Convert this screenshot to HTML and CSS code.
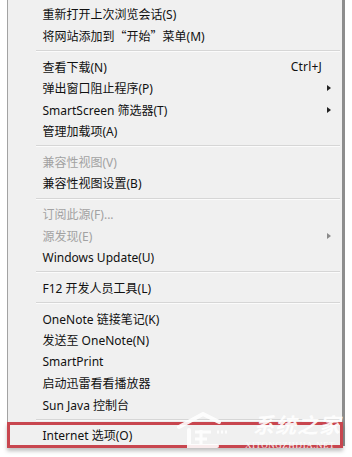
FILE: index.html
```html
<!DOCTYPE html>
<html>
<head>
<meta charset="utf-8">
<link rel="stylesheet" href="styles.css">
</head>
<body>
<div class="page">
  <div class="menu">
    <div class="item"><span class="label">重新打开上次浏览会话(S)</span></div>
    <div class="item"><span class="label">将网站添加到<span class="cjk">“开始”</span>菜单(M)</span></div>
    <div class="sep"></div>
    <div class="item"><span class="label">查看下载(N)</span><span class="key">Ctrl+J</span></div>
    <div class="item"><span class="label">弹出窗口阻止程序(P)</span><span class="arrow"></span></div>
    <div class="item"><span class="label">SmartScreen 筛选器(T)</span><span class="arrow"></span></div>
    <div class="item"><span class="label">管理加载项(A)</span></div>
    <div class="sep"></div>
    <div class="item disabled"><span class="label">兼容性视图(V)</span></div>
    <div class="item"><span class="label">兼容性视图设置(B)</span></div>
    <div class="sep"></div>
    <div class="item disabled"><span class="label">订阅此源(F)...</span></div>
    <div class="item disabled"><span class="label">源发现(E)</span><span class="arrow"></span></div>
    <div class="item"><span class="label">Windows Update(U)</span></div>
    <div class="sep"></div>
    <div class="item"><span class="label">F12 开发人员工具(L)</span></div>
    <div class="sep"></div>
    <div class="item"><span class="label">OneNote 链接笔记(K)</span></div>
    <div class="item"><span class="label">发送至 OneNote(N)</span></div>
    <div class="item"><span class="label">SmartPrint</span></div>
    <div class="item"><span class="label">启动迅雷看看播放器</span></div>
    <div class="item"><span class="label">Sun Java 控制台</span></div>
    <div class="sep"></div>
    <div class="item marked"><span class="label">Internet 选项(O)</span><span class="mark"></span></div>
  </div>
  <div class="watermark">
    <svg class="wm-logo" width="54" height="40" viewBox="0 0 54 40">
      <path d="M2 17 L26 4 L42 12" fill="none" stroke="#fff" stroke-width="4" stroke-linecap="round"/>
      <path d="M12 20 L12 36 L40 36" fill="none" stroke="#fff" stroke-width="4" stroke-linecap="round"/>
      <path d="M18 22 L34 22 M18 29 L30 29 M24 20 L24 36" fill="none" stroke="#fff" stroke-width="3"/>
      <path d="M40 22 L50 22" fill="none" stroke="#fff" stroke-width="3" stroke-dasharray="2 2"/>
    </svg>
    <div class="wm-text">
      <span class="wm-cn">系统之家</span>
      <span class="wm-en">XITONGZHIJIA.NET</span>
    </div>
  </div>
</div>
</body>
</html>
```
FILE: styles.css
```css
html, body {
  margin: 0;
  padding: 0;
  background: #ffffff;
}
.page {
  position: relative;
  width: 352px;
  height: 457px;
  overflow: hidden;
}
.menu {
  margin-left: 7px;
  width: 334px;
  border-left: 1px solid #a3a3a3;
  border-right: 3px solid #8d8d8d;
  background: #f0f0f0;
  padding-top: 3.5px;
  font-family: "Noto Sans", "Noto Sans CJK SC", sans-serif;
  font-size: 12px;
  color: #111;
}
.cjk {
  font-family: "Noto Sans CJK SC", sans-serif;
}
.item {
  position: relative;
  display: flex;
  align-items: center;
  height: 21.5px;
  padding-left: 34.5px;
  padding-right: 11px;
  white-space: nowrap;
}
.label {
  flex: 1;
}
.key {
  margin-right: 9px;
  letter-spacing: 0.2px;
}
.arrow {
  width: 0;
  height: 0;
  border-top: 3.5px solid transparent;
  border-bottom: 3.5px solid transparent;
  border-left: 4px solid #222;
}
.disabled {
  color: #a2a2a2;
}
.disabled .arrow {
  border-left-color: #8a8a8a;
}
.sep {
  height: 9.25px;
  display: flex;
  flex-direction: column;
  justify-content: center;
  margin-left: 28px;
  margin-right: 2px;
}
.sep::before {
  content: "";
  display: block;
  height: 1px;
  background: #d6d6d6;
  border-bottom: 1px solid #fbfbfb;
}
.mark {
  position: absolute;
  left: -1px;
  right: -1px;
  top: -2.5px;
  bottom: -1.5px;
  border: 3px solid #c8464f;
  box-shadow: 0 3px 4px rgba(0, 0, 0, 0.25);
}
.watermark {
  position: absolute;
  left: 177px;
  top: 410px;
  display: flex;
  align-items: flex-start;
  gap: 4px;
  opacity: 0.9;
}
.wm-text {
  display: flex;
  flex-direction: column;
  margin-top: 2px;
}
.wm-cn {
  font-family: "Noto Sans CJK SC", sans-serif;
  font-size: 21px;
  line-height: 24px;
  color: #ffffff;
  font-weight: 700;
  font-style: italic;
  letter-spacing: 1px;
  margin-left: 18px;
}
.wm-en {
  font-family: "Liberation Serif", serif;
  font-size: 9px;
  line-height: 10px;
  color: #ffffff;
  letter-spacing: 0.5px;
  margin-left: 10px;
  margin-top: 4px;
}
```
